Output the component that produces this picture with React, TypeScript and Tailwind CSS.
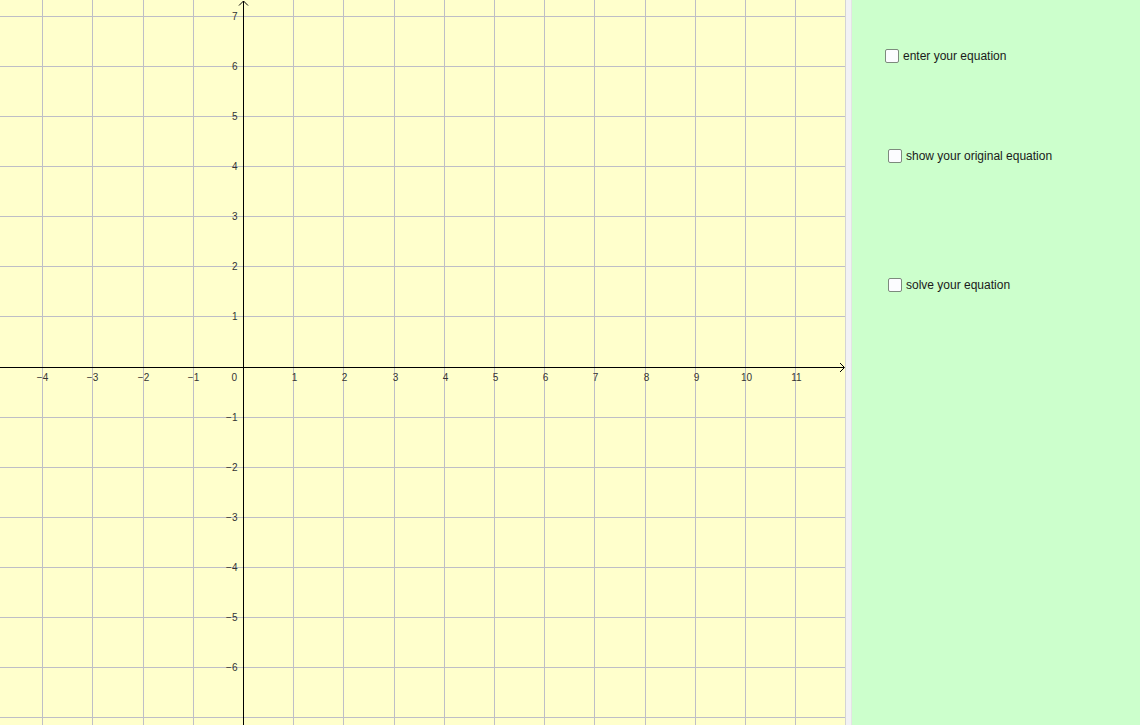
import React from "react";

const X0 = 243;
const SX = 50.2;
const Y0 = 366.5;
const SY = 50.08;

function Graph() {
  const xs: number[] = [];
  for (let k = -4; k <= 11; k++) xs.push(k);
  const ys: number[] = [];
  for (let k = -7; k <= 7; k++) ys.push(k);
  const gx = (k: number) => Math.round(X0 + SX * k) + 0.5;
  const gy = (k: number) => Math.round(Y0 - SY * k) + 0.5;
  const ax = gx(0);
  const ay = gy(0);
  return (
    <svg width={845} height={725} className="block" style={{ fontFamily: '"Liberation Sans", Arial, sans-serif' }}>
      <rect x={0} y={0} width={845} height={725} fill="#ffffcc" />
      <g stroke="#bebec6" strokeWidth={1} shapeRendering="crispEdges">
        {xs.filter((k) => k !== 0).map((k) => (
          <line key={"x" + k} x1={gx(k)} y1={0} x2={gx(k)} y2={725} />
        ))}
        {ys.filter((k) => k !== 0).map((k) => (
          <line key={"y" + k} x1={0} y1={gy(k)} x2={845} y2={gy(k)} />
        ))}
      </g>
      <g stroke="#000" strokeWidth={1} shapeRendering="crispEdges">
        <line x1={0} y1={ay} x2={844} y2={ay} />
        <line x1={ax} y1={1} x2={ax} y2={725} />
      </g>
      <g stroke="#000" strokeWidth={1} fill="none">
        <polyline points={`${840},${ay - 4.5} ${844.5},${ay} ${840},${ay + 4.5}`} />
        <polyline points={`${ax - 4.5},${5.5} ${ax},${1} ${ax + 4.5},${5.5}`} />
      </g>
      <g fill="#333" fontSize={10}>
        {xs.filter((k) => k !== 0).map((k) => (
          <text key={"lx" + k} x={gx(k) + (k > 0 ? 1 : 0)} y={381} textAnchor="middle">
            {k < 0 ? "\u2212" + Math.abs(k) : String(k)}
          </text>
        ))}
        <text x={237} y={381} textAnchor="end">0</text>
        {ys.filter((k) => k !== 0 && k !== -7).map((k) => (
          <text key={"ly" + k} x={237.5} y={gy(k) + 3.5} textAnchor="end">
            {k < 0 ? "\u2212" + Math.abs(k) : String(k)}
          </text>
        ))}
      </g>
    </svg>
  );
}

function Check({ label, className }: { label: string; className: string }) {
  return (
    <div className={"flex items-center " + className}>
      <span className="block w-[14px] h-[14px] rounded-[2px] border-[1.5px] border-[#7d8a7d] bg-[#fcfcff] shrink-0" />
      <span className="ml-[4px] text-[12px] leading-[14px] text-[#1a1a1a]" style={{ fontFamily: '"Liberation Sans", Arial, sans-serif' }}>
        {label}
      </span>
    </div>
  );
}

export default function App() {
  return (
    <div className="flex w-[1140px] h-[725px] overflow-hidden">
      <div className="w-[845px] h-[725px] shrink-0">
        <Graph />
      </div>
      <div className="w-[7px] h-[725px] shrink-0 bg-[#f2f2f4] border-l border-[#d4d4d4] border-r border-r-[#e4e4e4]" />
      <div className="flex-1 h-[725px] bg-[#ccffcc] flex flex-col">
        <Check label="enter your equation" className="mt-[49px] ml-[33px]" />
        <Check label="show your original equation" className="mt-[86px] ml-[36px]" />
        <Check label="solve your equation" className="mt-[115px] ml-[36px]" />
      </div>
    </div>
  );
}
